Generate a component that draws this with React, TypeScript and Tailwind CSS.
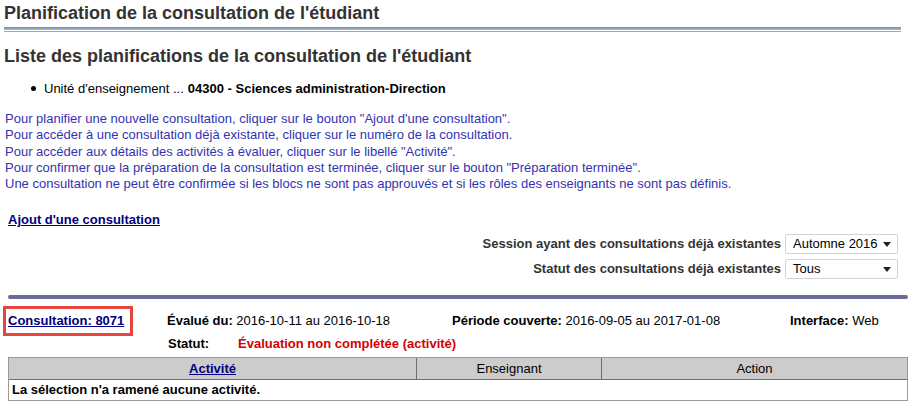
import React from 'react';

const instructions = [
  'Pour planifier une nouvelle consultation, cliquer sur le bouton "Ajout d\'une consultation".',
  'Pour accéder à une consultation déjà existante, cliquer sur le numéro de la consultation.',
  'Pour accéder aux détails des activités à évaluer, cliquer sur le libellé "Activité".',
  'Pour confirmer que la préparation de la consultation est terminée, cliquer sur le bouton "Préparation terminée".',
  'Une consultation ne peut être confirmée si les blocs ne sont pas approuvés et si les rôles des enseignants ne sont pas définis.',
];

function FakeSelect({ value }: { value: string }) {
  return (
    <div className="w-[113px] h-[20px] border border-[#d4d4d4] rounded-[2px] bg-white flex items-center justify-between pl-[7px] pr-[6px] text-[13px] leading-[16px] text-black">
      <span>{value}</span>
      <svg width="8" height="5" viewBox="0 0 8 5">
        <path d="M0 0h8L4 5z" fill="#222" />
      </svg>
    </div>
  );
}

export default function App() {
  return (
    <div className="w-[919px] h-[407px] overflow-hidden bg-white text-[#333] font-['Liberation_Sans',Arial,sans-serif]">
      {/* Page title */}
      <div className="pl-[4px] pt-[3px] w-[901px]">
        <h1 className="text-[18px] font-bold leading-[20px]">
          Planification de la consultation de l'étudiant
        </h1>
        <div className="mt-[4px] h-[3px] bg-gradient-to-b from-[#6f8cb0] to-[#a9bdd4]" />
        <div className="mt-[1px] h-[1px] bg-[#a8a8a8]" />
      </div>

      {/* Section title */}
      <h2 className="pl-[4px] mt-[13px] text-[18px] font-bold leading-[22px]">
        Liste des planifications de la consultation de l'étudiant
      </h2>

      <div className="mt-[14px] flex items-center text-[13px] leading-[15px] text-black">
        <span className="ml-[31px] w-[5px] h-[5px] rounded-full bg-black" />
        <span className="ml-[8px]">Unité d'enseignement ... </span>
        <span className="ml-[4px] font-bold">04300 - Sciences administration-Direction</span>
      </div>

      <div className="mt-[15px] pl-[5px] text-[13px] leading-[16.25px] text-[#3333b0]">
        {instructions.map((line) => (
          <div key={line}>{line}</div>
        ))}
      </div>

      <div className="mt-[15px] pl-[8px] h-[16px]">
        <a href="#" className="text-[13px] font-bold text-[#000080] underline leading-[16px]">
          Ajout d'une consultation
        </a>
      </div>

      {/* Filters */}
      <div className="mt-[11px] pr-[21px] flex flex-col items-end gap-[5px]">
        <div className="flex items-center gap-[4px] h-[20px]">
          <span className="text-[13px] leading-[16px] font-bold">Session ayant des consultations déjà existantes</span>
          <FakeSelect value="Automne 2016" />
        </div>
        <div className="flex items-center gap-[4px] h-[20px]">
          <span className="text-[13px] leading-[16px] font-bold">Statut des consultations déjà existantes</span>
          <FakeSelect value="Tous" />
        </div>
      </div>

      <div className="mt-[16px] ml-[8px] w-[900px] h-[4px] rounded-full bg-[#6b6b9b]" />

      {/* Consultation header */}
      <div className="mt-[7px] pl-[3px] flex items-center h-[30px] text-[13px] leading-[16px] text-black">
        <div className="w-[164px]">
          <div className="w-[130px] h-[30px] flex items-center border-[3px] border-[#e5473f] pl-[2px]">
            <a href="#" className="font-bold text-[#000080] underline">
              Consultation: 8071
            </a>
          </div>
        </div>
        <div className="w-[285px]">
          <span className="font-bold">Évalué du:</span> 2016-10-11 au 2016-10-18
        </div>
        <div className="w-[338px]">
          <span className="font-bold">Période couverte:</span> 2016-09-05 au 2017-01-08
        </div>
        <div>
          <span className="font-bold">Interface:</span> Web
        </div>
      </div>

      <div className="pl-[168px] flex text-[13px] leading-[16px] font-bold">
        <span className="w-[70px] text-black">Statut:</span>
        <span className="text-[#d40000]">Évaluation non complétée (activité)</span>
      </div>

      {/* Activities table */}
      <div className="mt-[5px] ml-[8px] w-[900px] border border-[#9a9a9a] text-[13px] text-black">
        <div className="flex bg-[#cccccc] h-[22px] border-b border-[#6e6e6e] leading-[21px]">
          <div className="w-[408px] text-center border-r border-[#6e6e6e]">
            <a href="#" className="font-bold text-[#000080] underline">Activité</a>
          </div>
          <div className="w-[185px] text-center border-r border-[#6e6e6e]">Enseignant</div>
          <div className="flex-1 text-center">Action</div>
        </div>
        <div className="h-[20px] pl-[3px] leading-[20px] font-bold">
          La sélection n'a ramené aucune activité.
        </div>
      </div>
    </div>
  );
}
